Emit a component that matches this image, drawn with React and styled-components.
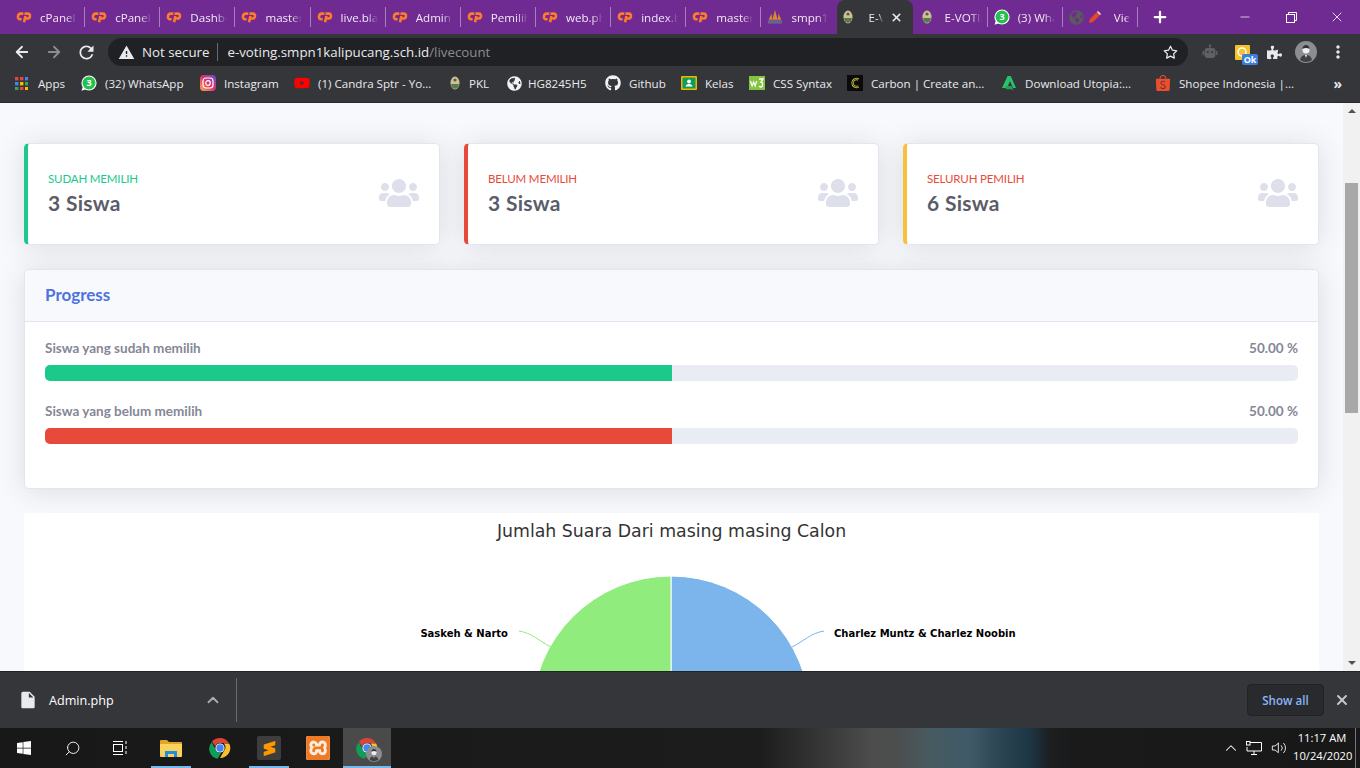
import React from 'react';
import styled, { createGlobalStyle } from 'styled-components';
import { FaUsers, FaGithub, FaGlobeAmericas, FaPuzzlePiece, FaWindows, FaYoutube } from 'react-icons/fa';
import { SiShopee, SiSublimetext, SiXampp } from 'react-icons/si';
import { FiArrowLeft, FiArrowRight, FiSearch, FiChevronUp, FiMinus, FiX, FiPlus, FiStar, FiVolume2 } from 'react-icons/fi';
import { MdWarning, MdMoreVert, MdInsertDriveFile, MdRefresh } from 'react-icons/md';

const GlobalStyle = createGlobalStyle`
  html, body { margin: 0; padding: 0; height: 100%; overflow: hidden; }
  #root { height: 100%; }
  * { box-sizing: border-box; }
`;

const UI_FONT = '"Open Sans", "Noto Sans", sans-serif';
const PAGE_FONT = 'Lato, "Open Sans", sans-serif';

const Screen = styled.div`
  width: 1360px;
  height: 768px;
  display: flex;
  flex-direction: column;
  overflow: hidden;
  background: #f8f9fc;
  font-family: ${UI_FONT};
`;

/* ---- tab strip ---- */
const TabStrip = styled.div`
  height: 34px;
  flex: none;
  display: flex;
  align-items: center;
  padding-left: 10px;
  background: #6f2b91;
  color: #fff;
`;

const Tab = styled.div`
  width: 75.15px;
  height: 20px;
  flex: none;
  display: flex;
  align-items: center;
  gap: ${p => p.$gap || 8}px;
  padding-left: 6px;
  border-right: 1px solid ${p => (p.$noLine ? 'transparent' : '#a87fbd')};
  font-size: 11.6px;
  color: #f1e7f5;
`;

const ActiveTab = styled.div`
  width: 76px;
  height: 34px;
  flex: none;
  display: flex;
  align-items: center;
  padding-left: 3px;
  gap: 13px;
  background: #35363a;
  border-radius: 8px 8px 0 0;
  font-size: 11.6px;
  color: #e8eaed;
`;

const TabClose = styled(FiX)`
  margin-left: -6px;
`;

const TabTitle = styled.span`
  width: ${p => p.$w || 37}px;
  margin-left: ${p => p.$ml || 0}px;
  overflow: hidden;
  white-space: nowrap;
  -webkit-mask-image: linear-gradient(to right, #000 70%, transparent 100%);
  mask-image: linear-gradient(to right, #000 70%, transparent 100%);
`;

const IconSlot = styled.span`
  width: ${p => p.$size || 16}px;
  height: ${p => p.$size || 16}px;
  flex: none;
  display: flex;
  align-items: center;
  justify-content: center;
  color: ${p => p.$color || 'inherit'};
`;

const StarSlot = styled(IconSlot)`
  margin-left: auto;
`;

const NewTab = styled.div`
  width: 44px;
  flex: none;
  display: flex;
  justify-content: center;
`;

const WindowControls = styled.div`
  margin-left: auto;
  display: flex;
  height: 34px;
  align-items: center;
`;

const WindowButton = styled.div`
  width: 46px;
  display: flex;
  justify-content: center;
  color: #fff;
`;

/* ---- toolbar ---- */
const Toolbar = styled.div`
  height: 33px;
  flex: none;
  display: flex;
  align-items: center;
  background: #35363a;
  padding-top: 3px;
  padding-left: 6px;
`;

const NavButton = styled.div`
  width: 32px;
  display: flex;
  justify-content: center;
  color: ${p => (p.$off ? '#8b8c8e' : '#e8eaed')};
`;

const Omnibox = styled.div`
  width: 1080px;
  height: 28px;
  margin-left: 6px;
  flex: none;
  display: flex;
  align-items: center;
  padding: 0 10px;
  border-radius: 14px;
  background: #202124;
  font-size: 13.3px;
  color: #e8eaed;
`;

const SecureLabel = styled.span`
  margin-left: 7px;
`;

const Divider = styled.span`
  width: 1px;
  height: 18px;
  margin: 0 9px 0 8px;
  background: #6a6b6e;
`;

const UrlFaint = styled.span`
  color: #8b8c8f;
`;

const ExtensionRow = styled.div`
  display: flex;
  align-items: center;
  margin-left: 6px;
  flex: 1;
`;

const ExtensionSlot = styled.div`
  width: 32px;
  display: flex;
  justify-content: center;
  position: relative;
  color: #e8eaed;
`;

const OkBadge = styled.span`
  position: absolute;
  right: 0;
  bottom: -5px;
  width: 16px;
  height: 11px;
  border-radius: 2px;
  background: #3b7de0;
  color: #fff;
  font-size: 9px;
  font-weight: 700;
  line-height: 11px;
  text-align: center;
`;

/* ---- bookmarks ---- */
const BookmarkBar = styled.div`
  height: 36px;
  flex: none;
  display: flex;
  align-items: center;
  padding-left: 15px;
  padding-bottom: 3px;
  background: #35363a;
  border-bottom: 1px solid #28292c;
  font-size: 11.6px;
  color: #e8eaed;
`;

const Bookmark = styled.div`
  width: ${p => p.$w}px;
  flex: none;
  display: flex;
  align-items: center;
  gap: ${p => p.$gap || 8}px;
  white-space: nowrap;
  overflow: hidden;
`;

const MoreBookmarks = styled.div`
  margin-left: auto;
  padding-right: 18px;
  font-size: 14px;
  font-weight: 700;
  color: #e8eaed;
`;

/* ---- page ---- */
const PageArea = styled.div`
  flex: 1;
  min-height: 0;
  display: flex;
`;

const Content = styled.main`
  flex: 1;
  min-width: 0;
  padding: 40px 24px 0;
  overflow: hidden;
  font-family: ${PAGE_FONT};
`;

const StatRow = styled.div`
  display: grid;
  grid-template-columns: 416px 415px 416px;
  gap: 24px;
  margin-bottom: 24px;
`;

const StatCard = styled.div`
  height: 102px;
  display: flex;
  align-items: center;
  justify-content: space-between;
  padding: 0 20px 2px;
  background: #fff;
  border: 1px solid #e3e6f0;
  border-left: 4px solid ${p => p.$color};
  border-radius: 5px;
  box-shadow: 0 2px 28px rgba(58, 59, 69, 0.15);
`;

const StatLabel = styled.div`
  font-size: 11.5px;
  font-weight: 400;
  line-height: 14px;
  letter-spacing: -0.15px;
  text-transform: uppercase;
  color: ${p => p.$color};
  margin-bottom: 5px;
`;

const StatValue = styled.div`
  font-size: 21px;
  font-weight: 700;
  line-height: 24px;
  letter-spacing: 0.3px;
  color: #5a5c69;
`;

const Panel = styled.section`
  height: 220px;
  margin-bottom: 24px;
  background: #fff;
  border: 1px solid #e3e6f0;
  border-radius: 5px;
  box-shadow: 0 2px 28px rgba(58, 59, 69, 0.15);
`;

const PanelHead = styled.div`
  height: 52px;
  display: flex;
  align-items: center;
  padding: 0 20px 3px;
  background: #f8f9fc;
  border-bottom: 1px solid #e3e6f0;
  border-radius: 5px 5px 0 0;
  font-size: 17px;
  font-weight: 700;
  color: #4e73df;
`;

const PanelBody = styled.div`
  padding: 18px 20px 0;
`;

const BarHead = styled.div`
  display: flex;
  justify-content: space-between;
  font-size: 13.5px;
  font-weight: 700;
  line-height: 16px;
  color: #858796;
  margin-bottom: 9px;
`;

const BarTrack = styled.div`
  height: 16px;
  margin-bottom: 22px;
  border-radius: 5px;
  overflow: hidden;
  background: #eaecf4;
`;

const BarFill = styled.div`
  height: 100%;
  background: ${p => p.$color};
`;

const ChartBox = styled.section`
  background: #fff;
  height: 420px;
`;

const ChartSvg = styled.svg`
  display: block;
`;

const ChartTitle = styled.text`
  font-family: "DejaVu Sans", sans-serif;
  font-size: 17.35px;
  fill: #333;
`;

const ChartLabel = styled.text`
  font-family: "DejaVu Sans", sans-serif;
  font-size: 10px;
  font-weight: 700;
  fill: #000;
`;

const Scrollbar = styled.div`
  width: 17px;
  flex: none;
  display: flex;
  flex-direction: column;
  align-items: center;
  background: #f1f1f1;
`;

const ArrowUp = styled.span`
  margin-top: 6px;
  width: 0;
  height: 0;
  border-left: 4px solid transparent;
  border-right: 4px solid transparent;
  border-bottom: 4px solid #505050;
`;

const ArrowDown = styled.span`
  margin-top: auto;
  margin-bottom: 6px;
  width: 0;
  height: 0;
  border-left: 4px solid transparent;
  border-right: 4px solid transparent;
  border-top: 4px solid #505050;
`;

const Thumb = styled.div`
  margin-top: 70px;
  width: 13px;
  height: 230px;
  background: #a8a8a8;
`;

/* ---- download shelf ---- */
const Shelf = styled.div`
  height: 57px;
  flex: none;
  display: flex;
  align-items: center;
  background: #35363a;
  border-top: 1px solid #222326;
  color: #e8eaed;
`;

const ShelfItem = styled.div`
  width: 237px;
  height: 44px;
  display: flex;
  align-items: center;
  padding-left: 18px;
  border-right: 1px solid #6a6b6e;
  font-size: 12.6px;
  color: #fff;
`;

const ShelfName = styled.span`
  margin-left: 11px;
  flex: 1;
`;

const ShelfCaret = styled.span`
  display: flex;
  margin-right: 14px;
  color: #aaa;
`;

const ShowAll = styled.div`
  margin-left: auto;
  width: 77px;
  height: 32px;
  display: flex;
  align-items: center;
  justify-content: center;
  background: #292a2d;
  border: 1px solid #222326;
  border-radius: 4px;
  font-size: 11.6px;
  font-weight: 600;
  color: #8ab4f8;
`;

const ShelfClose = styled.div`
  width: 36px;
  display: flex;
  justify-content: center;
  color: #c4c6c9;
`;

/* ---- taskbar ---- */
const Taskbar = styled.div`
  height: 40px;
  flex: none;
  display: flex;
  align-items: stretch;
  color: #fff;
  background: linear-gradient(
    90deg,
    #181818 0,
    #1c1c1c 760px,
    #3a3a3a 830px,
    #4c4c4c 870px,
    #4c4f4f 900px,
    #475a60 930px,
    #3f5a68 970px,
    #2c4553 1000px,
    #1d3644 1030px,
    #1c1e20 1050px,
    #1a1a1a 1075px,
    #181818 1360px
  );
`;

const TaskCell = styled.div`
  width: 48px;
  flex: none;
  margin-right: ${p => p.$mr || 0}px;
  display: flex;
  align-items: center;
  justify-content: center;
  position: relative;
  background: ${p => (p.$active ? '#4a4a4a' : 'transparent')};
  &::after {
    content: '';
    display: ${p => (p.$open || p.$active ? 'block' : 'none')};
    position: absolute;
    bottom: 0;
    left: ${p => (p.$active ? 0 : 4)}px;
    right: ${p => (p.$active ? 0 : 4)}px;
    height: 2px;
    background: #76b9ed;
  }
`;

const AppTile = styled.span`
  width: 24px;
  height: 24px;
  display: flex;
  align-items: center;
  justify-content: center;
  border-radius: 2px;
  background: ${p => p.$bg};
`;

const ProfileBadge = styled.span`
  position: absolute;
  left: 23px;
  top: 18px;
  width: 16px;
  height: 16px;
  display: flex;
`;

const SearchGlass = styled(FiSearch)`
  transform: scaleX(-1);
`;

const Tray = styled.div`
  margin-left: auto;
  display: flex;
  align-items: center;
`;

const TrayIcon = styled.div`
  width: ${p => p.$w || 25}px;
  display: flex;
  justify-content: center;
`;

const Clock = styled.div`
  width: 58px;
  margin-left: 2px;
  padding-bottom: 3px;
  text-align: center;
  font-size: 11.2px;
  line-height: 18px;
  color: #fff;
  white-space: nowrap;
`;

const DesktopEdge = styled.div`
  width: 5px;
  margin-left: 4px;
  align-self: stretch;
  border-left: 1px solid #777;
`;

/* ---- drawn icons ---- */
const CPanelIcon = () => (
  <svg width="17" height="13" viewBox="0 0 17 13" fill="none" stroke="#ff7a2c" strokeWidth="2.8">
    <path d="M7.8 2.4H5C1.6 2.4 1 8.4 4.2 8.4H6" />
    <path d="M9 2.4h3.5c3.4 0 3 5.2-.4 5.2h-1.6" />
    <path d="M10 4.8 8.6 11.6" />
  </svg>
);

const Chrome = ({ size = 22 }) => (
  <svg width={size} height={size} viewBox="0 0 24 24">
    <path d="M12 1a11 11 0 0 1 9.5 5.5H12a5.5 5.5 0 0 0-5.2 3.7L3.2 5.1A11 11 0 0 1 12 1z" fill="#db4437" />
    <path d="M2.9 5.6l4.6 8.2a5.5 5.5 0 0 0 5.6 3.6l-3.5 6.3A11 11 0 0 1 2.9 5.6z" fill="#0f9d58" />
    <path d="M22 7a11 11 0 0 1-10 16l4.7-8.2A5.5 5.5 0 0 0 16 7z" fill="#fbc02d" />
    <circle cx="12" cy="12" r="5" fill="#fff" />
    <circle cx="12" cy="12" r="4" fill="#4285f4" />
  </svg>
);

const Crest = () => (
  <svg width="10" height="14" viewBox="0 0 10 14">
    <ellipse cx="5" cy="7" rx="4.5" ry="6.5" fill="#c9c19a" />
    <path d="M1 8h8l-1 3.5L5 13l-3-1.5z" fill="#5b7b46" />
    <circle cx="5" cy="4" r="1.6" fill="#6b5a3a" />
  </svg>
);

const Sail = () => (
  <svg width="18" height="18" viewBox="0 0 18 18">
    <path d="M9 1l3 11H6zM5 5l1 7H2zM13 5l3 7h-4z" fill="#d98a2b" />
    <rect x="1" y="12.5" width="16" height="4" fill="#67648f" />
  </svg>
);

const WhatsBadge = ({ size = 16 }) => (
  <svg width={size} height={size} viewBox="0 0 16 16">
    <circle cx="8" cy="8" r="7.6" fill="#fff" />
    <path d="M.5 15.8l1.5-4.6 3 3z" fill="#fff" />
    <circle cx="8" cy="8" r="6.5" fill="#25c04d" />
    <text x="8" y="11" textAnchor="middle" fontSize="9" fontWeight="700" fill="#fff" fontFamily="Open Sans, sans-serif">3</text>
  </svg>
);

const Insta = () => (
  <svg width="16" height="16" viewBox="0 0 16 16">
    <defs>
      <linearGradient id="ig" x1="0" y1="1" x2="1" y2="0">
        <stop offset="0" stopColor="#fdb44b" />
        <stop offset="0.5" stopColor="#e1306c" />
        <stop offset="1" stopColor="#5b51d8" />
      </linearGradient>
    </defs>
    <rect width="16" height="16" rx="4" fill="url(#ig)" />
    <rect x="3" y="3" width="10" height="10" rx="3" fill="none" stroke="#fff" strokeWidth="1.2" />
    <circle cx="8" cy="8" r="2.3" fill="none" stroke="#fff" strokeWidth="1.2" />
  </svg>
);

const AppsGrid = () => {
  const colors = ['#e0483e', '#e0483e', '#4285f4', '#4285f4', '#fbbc05', '#34a853', '#34a853', '#e0483e', '#fbbc05'];
  return (
    <svg width="13" height="13" viewBox="0 0 13 13">
      {colors.map((c, i) => (
        <rect key={i} x={(i % 3) * 5} y={Math.floor(i / 3) * 5} width="3.4" height="3.4" fill={c} />
      ))}
    </svg>
  );
};

const Classroom = () => (
  <svg width="16" height="14" viewBox="0 0 16 14">
    <rect width="16" height="14" rx="1" fill="#f4b400" />
    <rect x="1.5" y="1.5" width="13" height="11" fill="#0f9d58" />
    <circle cx="8" cy="5.5" r="1.9" fill="#fff" />
    <path d="M4.5 10.5c.5-2 2-2.6 3.5-2.6s3 .6 3.5 2.6z" fill="#fff" />
  </svg>
);

const W3 = () => (
  <svg width="16" height="14" viewBox="0 0 16 14">
    <rect width="16" height="14" fill="#84c441" />
    <path d="M1.5 5l1.6 5 1.5-4 1.5 4 1.6-5" fill="none" stroke="#fff" strokeWidth="1.2" />
    <path d="M10 3h4l-2 3.2c2.2 0 2.2 4.8-.4 4.8-.8 0-1.3-.3-1.6-.8" fill="none" stroke="#fff" strokeWidth="1.3" />
  </svg>
);

const Carbon = () => (
  <svg width="16" height="16" viewBox="0 0 16 16">
    <rect width="16" height="16" fill="#0a0a0a" />
    <path d="M11.5 4.5A4 4 0 1 0 11.5 11.5" fill="none" stroke="#c6c23a" strokeWidth="2.4" />
    <path d="M11.5 4.5A4 4 0 1 0 11.5 11.5" fill="none" stroke="#0a0a0a" strokeWidth=".7" />
  </svg>
);

const Utopia = () => (
  <svg width="16" height="16" viewBox="0 0 16 16">
    <path d="M6.5 1h3.2L15 13h-3l-3-7-3 7H1z" fill="#27c26c" />
    <path d="M4.5 11h6l2 4.5-2-1.2H5z" fill="#2a9d57" />
  </svg>
);

const Robot = () => (
  <svg width="16" height="16" viewBox="0 0 16 16" fill="#5f6062">
    <circle cx="8" cy="1.5" r="1.2" />
    <rect x="7.4" y="2" width="1.2" height="2" />
    <rect x="2.5" y="4" width="11" height="10" rx="3" />
    <rect x="0.5" y="7" width="1.5" height="4" rx=".6" />
    <rect x="14" y="7" width="1.5" height="4" rx=".6" />
    <circle cx="5.8" cy="8" r="1" fill="#35363a" />
    <circle cx="10.2" cy="8" r="1" fill="#35363a" />
  </svg>
);

const Avatar = ({ size = 22 }) => (
  <svg width={size} height={size} viewBox="0 0 22 22">
    <circle cx="11" cy="11" r="11" fill="#8c8d90" />
    <path d="M5 19c1-4 3-5 6-5s5 1 6 5a11 11 0 0 1-12 0z" fill="#3e4044" />
    <circle cx="11" cy="9" r="3.5" fill="#eee" />
    <path d="M7.5 8c0-3 2-4 3.5-4s3.5 1 3.5 4c-2-1.5-5-1.5-7 0z" fill="#333" />
    <path d="M10 14h2l-1 3z" fill="#eee" />
  </svg>
);

const Restore = () => (
  <svg width="11" height="11" viewBox="0 0 11 11" fill="none" stroke="#fff">
    <rect x=".5" y="2.5" width="8" height="8" />
    <path d="M2.5 2.5v-2h8v8h-2" />
  </svg>
);

const Pen = () => (
  <svg width="14" height="14" viewBox="0 0 14 14">
    <path d="M9 2l3 3-7 7-4 1 1-4z" fill="#e8462a" />
    <path d="M10 1l3 3-1 1-3-3z" fill="#eee" />
  </svg>
);

const Explorer = () => (
  <svg width="22" height="18" viewBox="0 0 22 18">
    <path d="M0 2a1 1 0 0 1 1-1h6l2 2h12a1 1 0 0 1 1 1v2H0z" fill="#e0a526" />
    <path d="M0 5h22v12a1 1 0 0 1-1 1H1a1 1 0 0 1-1-1z" fill="#fbd35c" />
    <path d="M5 18v-6h12v6h-3v-3H8v3z" fill="#1f8fe0" />
  </svg>
);

const TaskView = () => (
  <svg width="16" height="16" viewBox="0 0 16 16" fill="none" stroke="#fff">
    <rect x="1.5" y="4.5" width="9" height="7" />
    <path d="M1 1.5h10M1 14.5h10M14 1v3M14 6v3M14 11v3" />
  </svg>
);

const Monitor = () => (
  <svg width="16" height="14" viewBox="0 0 16 14" fill="none" stroke="#fff">
    <path d="M4 1.5h11.5v8.5H1V6" />
    <rect x=".5" y=".5" width="3.5" height="3.5" />
    <path d="M8 10v3M5 13.5h6" />
  </svg>
);

const tabs = [
  ['cp', 'cPanel'], ['cp', 'cPanel'], ['cp', 'Dashboard'], ['cp', 'master'], ['cp', 'live.blade'],
  ['cp', 'Admin'], ['cp', 'Pemilih'], ['cp', 'web.php'], ['cp', 'index.b'], ['cp', 'master'], ['sail', 'smpn1'],
];

const bookmarks = [
  { w: 66, icon: <AppsGrid />, text: 'Apps', gap: 10 },
  { w: 119, icon: <WhatsBadge />, text: '(32) WhatsApp' },
  { w: 94, icon: <Insta />, text: 'Instagram' },
  { w: 156, icon: <FaYoutube size={16} color="#f00" />, text: '(1) Candra Sptr - Yo...' },
  { w: 57, icon: <Crest />, text: 'PKL', gap: 9 },
  { w: 98, icon: <FaGlobeAmericas size={15} color="#f1f3f4" />, text: 'HG8245H5', gap: 6 },
  { w: 76, icon: <FaGithub size={16} color="#f1f3f4" />, text: 'Github' },
  { w: 68, icon: <Classroom />, text: 'Kelas' },
  { w: 98, icon: <W3 />, text: 'CSS Syntax' },
  { w: 154, icon: <Carbon />, text: 'Carbon | Create an...' },
  { w: 154, icon: <Utopia />, text: 'Download Utopia:...' },
  { w: 160, icon: <SiShopee size={16} color="#ee4d2d" />, text: 'Shopee Indonesia |...' },
];

const stats = [
  { label: 'Sudah Memilih', value: '3 Siswa', color: '#1cc88a' },
  { label: 'Belum Memilih', value: '3 Siswa', color: '#e74a3b' },
  { label: 'Seluruh Pemilih', value: '6 Siswa', color: '#f6c23e', labelColor: '#e74a3b' },
];

const progress = [
  { label: 'Siswa yang sudah memilih', pct: 50, color: '#1cc88a' },
  { label: 'Siswa yang belum memilih', pct: 50, color: '#e74a3b' },
];

export default function App() {
  return (
    <Screen>
      <GlobalStyle />
      <TabStrip>
        {tabs.map(([kind, title], i) => (
          <Tab key={i} $noLine={i === tabs.length - 1}>
            <IconSlot>{kind === 'cp' ? <CPanelIcon /> : <Sail />}</IconSlot>
            <TabTitle>{title}</TabTitle>
          </Tab>
        ))}
        <ActiveTab>
          <IconSlot><Crest /></IconSlot>
          <TabTitle $w={14}>E-Voting</TabTitle>
          <TabClose size={13} color="#e8eaed" strokeWidth={3} />
        </ActiveTab>
        <Tab>
          <IconSlot><Crest /></IconSlot>
          <TabTitle $ml={2}>E-VOTING</TabTitle>
        </Tab>
        <Tab>
          <IconSlot><WhatsBadge /></IconSlot>
          <TabTitle>(3) WhatsApp</TabTitle>
        </Tab>
        <Tab $gap={2}>
          <IconSlot $color="#5a5a5f"><FaGlobeAmericas size={15} /></IconSlot>
          <IconSlot><Pen /></IconSlot>
          <TabTitle $w={16} $ml={9}>View</TabTitle>
        </Tab>
        <NewTab><FiPlus size={18} strokeWidth={3} /></NewTab>
        <WindowControls>
          <WindowButton><FiMinus size={14} strokeWidth={1.2} /></WindowButton>
          <WindowButton><Restore /></WindowButton>
          <WindowButton><FiX size={16} strokeWidth={1.2} /></WindowButton>
        </WindowControls>
      </TabStrip>

      <Toolbar>
        <NavButton><FiArrowLeft size={18} strokeWidth={2.4} /></NavButton>
        <NavButton $off><FiArrowRight size={18} strokeWidth={2.4} /></NavButton>
        <NavButton><MdRefresh size={21} /></NavButton>
        <Omnibox>
          <MdWarning size={17} />
          <SecureLabel>Not secure</SecureLabel>
          <Divider />
          <span>e-voting.smpn1kalipucang.sch.id<UrlFaint>/livecount</UrlFaint></span>
          <StarSlot><FiStar size={15} strokeWidth={2} /></StarSlot>
        </Omnibox>
        <ExtensionRow>
          <ExtensionSlot><Robot /></ExtensionSlot>
          <ExtensionSlot>
            <svg width="15" height="15" viewBox="0 0 15 15">
              <rect width="15" height="15" rx="1" fill="#f4c430" />
              <circle cx="7" cy="7" r="4" fill="none" stroke="#fff" strokeWidth="1.5" />
            </svg>
            <OkBadge>Ok</OkBadge>
          </ExtensionSlot>
          <ExtensionSlot><FaPuzzlePiece size={15} /></ExtensionSlot>
          <ExtensionSlot><Avatar /></ExtensionSlot>
          <ExtensionSlot><MdMoreVert size={20} /></ExtensionSlot>
        </ExtensionRow>
      </Toolbar>

      <BookmarkBar>
        {bookmarks.map(b => (
          <Bookmark key={b.text} $w={b.w} $gap={b.gap}>
            {b.icon}
            <span>{b.text}</span>
          </Bookmark>
        ))}
        <MoreBookmarks>»</MoreBookmarks>
      </BookmarkBar>

      <PageArea>
        <Content>
          <StatRow>
            {stats.map(s => (
              <StatCard key={s.label} $color={s.color}>
                <div>
                  <StatLabel $color={s.labelColor || s.color}>{s.label}</StatLabel>
                  <StatValue>{s.value}</StatValue>
                </div>
                <FaUsers size={40} color="#dddfeb" />
              </StatCard>
            ))}
          </StatRow>

          <Panel>
            <PanelHead>Progress</PanelHead>
            <PanelBody>
              {progress.map(p => (
                <div key={p.label}>
                  <BarHead>
                    <span>{p.label}</span>
                    <span>{p.pct.toFixed(2)} %</span>
                  </BarHead>
                  <BarTrack>
                    <BarFill $color={p.color} style={{ width: `${p.pct}%` }} />
                  </BarTrack>
                </div>
              ))}
            </PanelBody>
          </Panel>

          <ChartBox>
            <ChartSvg width="1295" height="420" viewBox="0 0 1295 420">
              <ChartTitle x="647.5" y="24" textAnchor="middle">Jumlah Suara Dari masing masing Calon</ChartTitle>
              <path d="M647 202 L647 63 A139 139 0 0 1 647 341 Z" fill="#7cb5ec" stroke="#fff" />
              <path d="M647 202 L647 341 A139 139 0 0 1 647 63 Z" fill="#90ed7d" stroke="#fff" />
              <path d="M495 118 C508 120 515 128 527 134" fill="none" stroke="#90ed7d" />
              <path d="M800 118 C787 120 780 128 768 134" fill="none" stroke="#7cb5ec" />
              <ChartLabel x="484" y="124" textAnchor="end">Saskeh &amp; Narto</ChartLabel>
              <ChartLabel x="810" y="124">Charlez Muntz &amp; Charlez Noobin</ChartLabel>
            </ChartSvg>
          </ChartBox>
        </Content>
        <Scrollbar>
          <ArrowUp />
          <Thumb />
          <ArrowDown />
        </Scrollbar>
      </PageArea>

      <Shelf>
        <ShelfItem>
          <MdInsertDriveFile size={20} color="#e8eaed" />
          <ShelfName>Admin.php</ShelfName>
          <ShelfCaret><FiChevronUp size={18} strokeWidth={2.5} /></ShelfCaret>
        </ShelfItem>
        <ShowAll>Show all</ShowAll>
        <ShelfClose><FiX size={16} strokeWidth={3} /></ShelfClose>
      </Shelf>

      <Taskbar>
        <TaskCell><FaWindows size={16} /></TaskCell>
        <TaskCell><SearchGlass size={17} strokeWidth={1.3} /></TaskCell>
        <TaskCell $mr={3}><TaskView /></TaskCell>
        <TaskCell $open $mr={1}><Explorer /></TaskCell>
        <TaskCell $mr={1}><Chrome /></TaskCell>
        <TaskCell $open $mr={1}>
          <AppTile $bg="#3d3d3d"><SiSublimetext size={15} color="#ff9800" /></AppTile>
        </TaskCell>
        <TaskCell $mr={1}>
          <AppTile $bg="#fdeee0"><SiXampp size={24} color="#ef7a24" /></AppTile>
        </TaskCell>
        <TaskCell $active>
          <Chrome />
          <ProfileBadge><Avatar size={16} /></ProfileBadge>
        </TaskCell>
        <Tray>
          <TrayIcon $w={21}><FiChevronUp size={18} strokeWidth={1.4} /></TrayIcon>
          <TrayIcon><Monitor /></TrayIcon>
          <TrayIcon><FiVolume2 size={16} strokeWidth={1.3} /></TrayIcon>
          <Clock>11:17 AM<br />10/24/2020</Clock>
          <DesktopEdge />
        </Tray>
      </Taskbar>
    </Screen>
  );
}
